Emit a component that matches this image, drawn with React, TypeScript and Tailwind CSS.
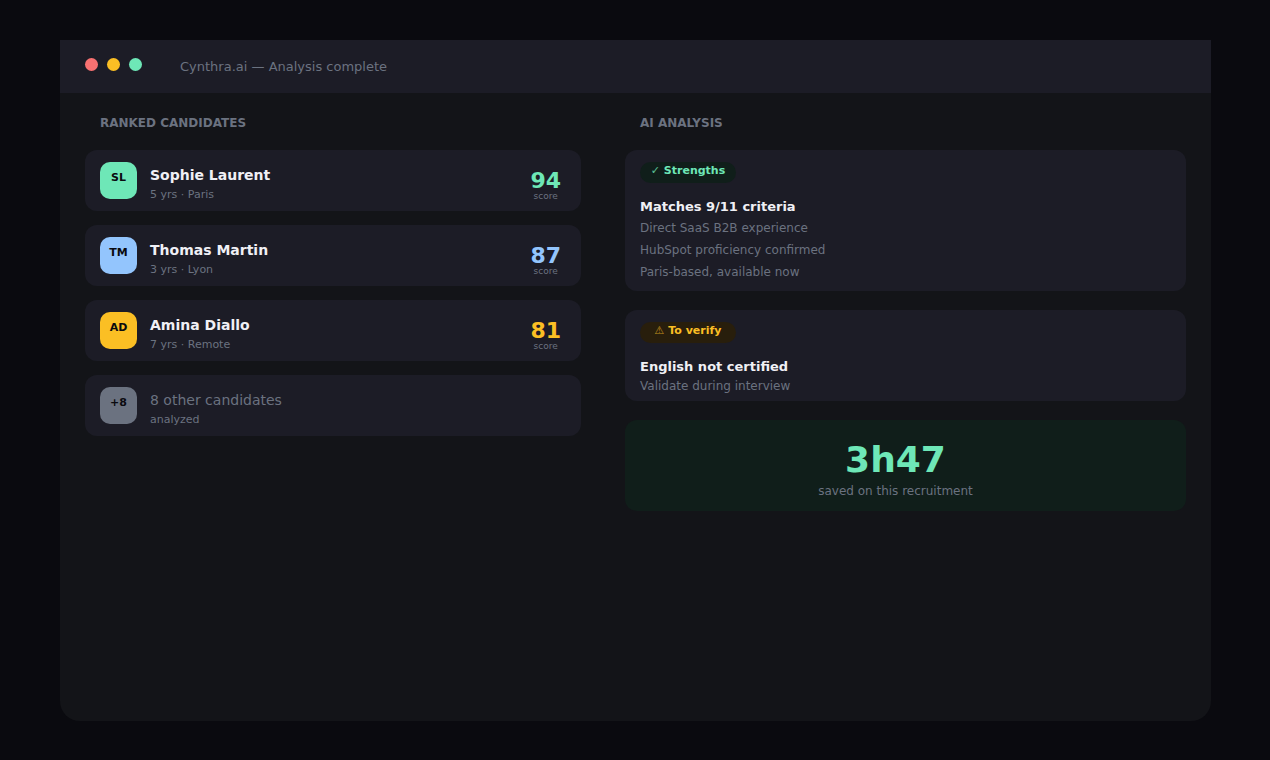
interface Candidate {
  initials: string;
  name: string;
  meta: string;
  score: number;
  avatar: string;
  scoreColor: string;
}

const candidates: Candidate[] = [
  {
    initials: "SL",
    name: "Sophie Laurent",
    meta: "5 yrs · Paris",
    score: 94,
    avatar: "bg-[#6ee7b7]",
    scoreColor: "text-[#6ee7b7]",
  },
  {
    initials: "TM",
    name: "Thomas Martin",
    meta: "3 yrs · Lyon",
    score: 87,
    avatar: "bg-[#93c5fd]",
    scoreColor: "text-[#93c5fd]",
  },
  {
    initials: "AD",
    name: "Amina Diallo",
    meta: "7 yrs · Remote",
    score: 81,
    avatar: "bg-[#fbbf24]",
    scoreColor: "text-[#fbbf24]",
  },
];

const strengths = [
  "Direct SaaS B2B experience",
  "HubSpot proficiency confirmed",
  "Paris-based, available now",
];

function TitleBar() {
  return (
    <header className="flex h-[53px] items-center bg-[#1c1c26] px-[25px]">
      <div className="mb-1 flex gap-[9px]">
        <span className="size-[13px] rounded-full bg-[#f87171]" />
        <span className="size-[13px] rounded-full bg-[#fbbf24]" />
        <span className="size-[13px] rounded-full bg-[#6ee7b7]" />
      </div>
      <p className="ml-[38px] text-[13px] leading-5">
        Cynthra.ai — Analysis complete
      </p>
    </header>
  );
}

function Avatar({ label, className }: { label: string; className: string }) {
  return (
    <div
      className={`size-[37px] shrink-0 rounded-[10px] pt-2 text-center text-[11px] leading-4 font-bold text-[#0a0a0f] ${className}`}
    >
      {label}
    </div>
  );
}

function CandidateCard({ candidate }: { candidate: Candidate }) {
  return (
    <li className="flex items-start gap-[13px] rounded-xl bg-[#1c1c26] pt-3 pr-5 pb-1.5 pl-[15px]">
      <Avatar label={candidate.initials} className={candidate.avatar} />
      <div className="flex-1 pt-[3px]">
        <h3 className="text-sm leading-5 font-bold text-[#f0f0f5]">
          {candidate.name}
        </h3>
        <p className="text-[11px] leading-5">{candidate.meta}</p>
      </div>
      <div className="pt-2 text-center">
        <p
          className={`text-[22px] leading-[22px] font-bold ${candidate.scoreColor}`}
        >
          {candidate.score}
        </p>
        <p className="text-[9px] leading-2">score</p>
      </div>
    </li>
  );
}

function SectionTitle({ children }: { children: string }) {
  return (
    <h2 className="mb-[19px] pl-[15px] text-xs leading-4 font-bold">
      {children}
    </h2>
  );
}

export default function App() {
  return (
    <div className="flex min-h-screen flex-col bg-[#0a0a0f] pt-10 pr-[59px] pb-[39px] pl-[60px] font-['DejaVu_Sans',sans-serif] text-[#6b7280]">
      <main className="flex-1 overflow-hidden rounded-b-[20px] bg-[#131418]">
        <TitleBar />
        <div className="grid grid-cols-[496fr_561fr] gap-11 px-[25px] pt-[22px] pb-6">
          <section>
            <SectionTitle>RANKED CANDIDATES</SectionTitle>
            <ul className="flex flex-col gap-[14px]">
              {candidates.map((candidate) => (
                <CandidateCard key={candidate.initials} candidate={candidate} />
              ))}
              <li className="flex items-start gap-[13px] rounded-xl bg-[#1c1c26] pt-3 pr-5 pb-1.5 pl-[15px]">
                <Avatar label="+8" className="bg-[#6b7280]" />
                <div className="pt-[3px]">
                  <h3 className="text-sm leading-5">8 other candidates</h3>
                  <p className="text-[11px] leading-5">analyzed</p>
                </div>
              </li>
            </ul>
          </section>

          <section>
            <SectionTitle>AI ANALYSIS</SectionTitle>
            <div className="flex flex-col gap-[19px]">
              <article className="rounded-xl bg-[#1c1c26] px-[15px] pt-3 pb-2">
                <p className="w-24 rounded-full bg-[#101e1a] pb-[3px] text-center text-[11px] leading-[18px] font-bold text-[#6ee7b7]">
                  <span className="opacity-80">✓</span> Strengths
                </p>
                <h3 className="mt-[14px] text-[13px] leading-5 font-bold text-[#f0f0f5]">
                  Matches 9/11 criteria
                </h3>
                <ul className="text-xs leading-[22px]">
                  {strengths.map((item) => (
                    <li key={item}>{item}</li>
                  ))}
                </ul>
              </article>

              <article className="rounded-xl bg-[#1c1c26] px-[15px] pt-3 pb-1.5">
                <p className="w-24 rounded-full bg-[#281e0c] pb-[3px] text-center text-[11px] leading-[18px] font-bold text-[#fbbf24]">
                  <span className="opacity-70">⚠</span> To verify
                </p>
                <h3 className="mt-[14px] text-[13px] leading-5 font-bold text-[#f0f0f5]">
                  English not certified
                </h3>
                <p className="text-xs leading-[18px]">
                  Validate during interview
                </p>
              </article>

              <article className="rounded-xl bg-[#101e1a] pt-5 pr-5 pb-[9px] text-center">
                <p className="text-4xl leading-10 font-bold text-[#6ee7b7]">
                  3h47
                </p>
                <p className="text-xs leading-[22px]">
                  saved on this recruitment
                </p>
              </article>
            </div>
          </section>
        </div>
      </main>
    </div>
  );
}
